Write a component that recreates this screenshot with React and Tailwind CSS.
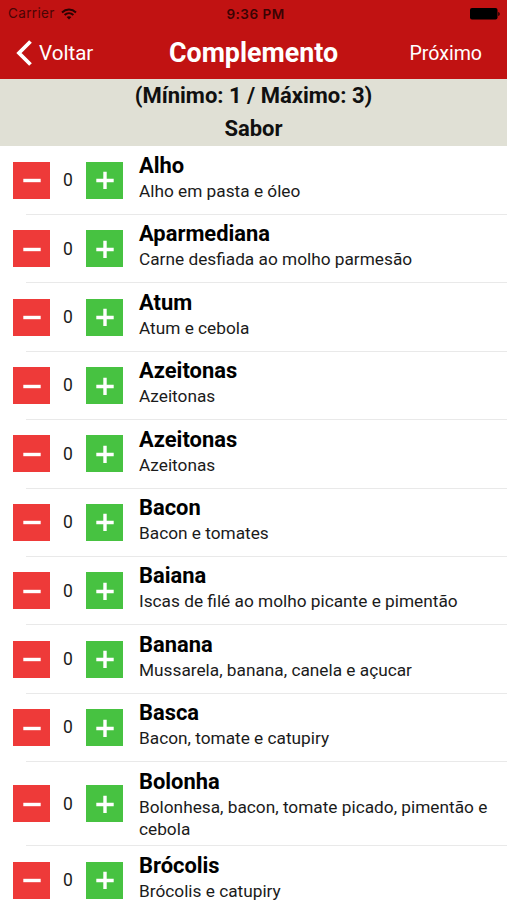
const items = [
  ['Alho', 'Alho em pasta e óleo'],
  ['Aparmediana', 'Carne desfiada ao molho parmesão'],
  ['Atum', 'Atum e cebola'],
  ['Azeitonas', 'Azeitonas'],
  ['Azeitonas', 'Azeitonas'],
  ['Bacon', 'Bacon e tomates'],
  ['Baiana', 'Iscas de filé ao molho picante e pimentão'],
  ['Banana', 'Mussarela, banana, canela e açucar'],
  ['Basca', 'Bacon, tomate e catupiry'],
  ['Bolonha', 'Bolonhesa, bacon, tomate picado, pimentão e cebola'],
  ['Brócolis', 'Brócolis e catupiry'],
];

function StatusBar() {
  return (
    <div className="grid h-[27px] grid-cols-3 items-center pr-[7px] pl-2 text-[#4a0505]">
      <div className="flex items-center gap-[6px] font-['Inter','Liberation_Sans',sans-serif] text-[13.5px] tracking-[0.35px]">
        <span>Carrier</span>
        <svg width="16" height="12" viewBox="0 0 16 12" fill="none" stroke="#2a0202" strokeWidth="2">
          <path d="M1 4.400C5 .6 11 .6 15 4.400" />
          <path d="M3.600 7.100C6.200 4.700 9.800 4.700 12.400 7.100" />
          <path d="M8 11.500 5.600 9.100C7 7.900 9 7.900 10.400 9.100Z" fill="#2a0202" stroke="none" />
        </svg>
      </div>
      <span className="pl-[3px] pt-px text-center font-['Inter','Liberation_Sans',sans-serif] text-[13.5px] font-semibold tracking-[0.5px] text-[#3a0303]">9:36 PM</span>
      <svg className="justify-self-end text-black" width="30" height="12" viewBox="0 0 30 12" fill="currentColor">
        <rect width="27.500" height="11.500" rx="2" />
        <path d="M28.300 4c1.800.5 1.800 3.500 0 4Z" />
      </svg>
    </div>
  );
}

function StepButton({ plus }) {
  return (
    <button className={`flex size-[37px] shrink-0 items-center justify-center ${plus ? 'bg-[#47c241]' : 'bg-[#ee3a39]'}`}>
      <svg width="18" height="18" viewBox="0 0 18 18" stroke="white" strokeWidth="3.4">
        <path d={plus ? 'M.3 9.500H17.700M9 .8V18' : 'M.3 9.500H17.700'} />
      </svg>
    </button>
  );
}

function Row({ title, text }) {
  return (
    <li className="relative flex min-h-[68.4px] items-center pl-[13px] after:absolute after:right-0 after:-bottom-[0.4px] after:left-[26px] after:h-px after:bg-[#e9e9e9]">
      <StepButton />
      <span className="w-9 text-center text-[17.5px]">0</span>
      <StepButton plus />
      <div className="ml-4 flex-1 self-start pt-[5.9px] pr-3 pb-[6.5px]">
        <h2 className="text-[21.9px] leading-[28px] font-bold text-black">{title}</h2>
        <p className="text-[17.25px] leading-[22px]">{text}</p>
      </div>
    </li>
  );
}

export default function App() {
  return (
    <div className="flex h-[900px] w-[507px] flex-col overflow-hidden bg-white font-['Roboto',sans-serif] text-[#1b1b1b]">
      <header className="h-[79px] shrink-0 bg-[#c11212]">
        <StatusBar />
        <nav className="grid h-[52px] grid-cols-[1fr_auto_1fr] items-center pr-[25px] pl-4 text-white">
          <div className="flex items-center gap-[7px] text-[20.6px]">
            <svg width="16" height="26" viewBox="0 0 16 26" fill="none" stroke="currentColor" strokeWidth="3.8">
              <path d="M14.500 1.500 3 13l11.500 11.500" />
            </svg>
            <span>Voltar</span>
          </div>
          <h1 className="pl-[9px] text-center text-[26.8px] font-bold">Complemento</h1>
          <span className="pt-px text-right text-[19.6px]">Próximo</span>
        </nav>
      </header>
      <div className="h-[67.200px] shrink-0 bg-[#e0e0d5] text-center text-[22px] leading-[33px] font-bold text-[#101010]">
        <p>(Mínimo: 1 / Máximo: 3)</p>
        <p>Sabor</p>
      </div>
      <ul>
        {items.map(([title, text], i) => (
          <Row key={i} title={title} text={text} />
        ))}
      </ul>
    </div>
  );
}
